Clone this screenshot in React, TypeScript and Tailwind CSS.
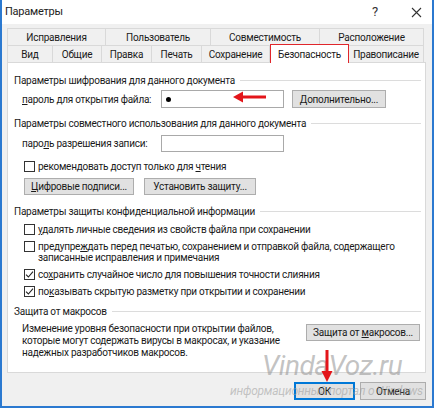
import React from 'react'

const font = { fontFamily: 'Roboto, "Noto Sans", sans-serif' }

function Section({ title, children }: { title: string; children?: React.ReactNode }) {
  return (
    <div>
      <div className="flex items-center gap-[5px] h-[14px]">
        <span className="whitespace-nowrap">{title}</span>
        <div className="flex-1 h-px bg-[#dcdcdc] mr-[4px]" />
      </div>
      {children}
    </div>
  )
}

function Button({ label, className = '' }: { label: React.ReactNode; className?: string }) {
  return (
    <div
      className={`h-[17px] flex items-center justify-center bg-[#e1e1e1] border border-[#adadad] whitespace-nowrap ${className}`}
    >
      {label}
    </div>
  )
}

function Check({ checked, children }: { checked?: boolean; children: React.ReactNode }) {
  return (
    <div className="flex items-start gap-[3px] pl-[16px]">
      <div className="mt-[1px] w-[11px] h-[11px] border border-[#333] bg-white flex items-center justify-center shrink-0">
        {checked && (
          <svg width="9" height="9" viewBox="0 0 9 9">
            <path d="M1 4.6 L3.4 7 L8 1.6" fill="none" stroke="#222" strokeWidth="1.1" />
          </svg>
        )}
      </div>
      <div className="leading-[11px] pt-[1px] whitespace-nowrap">{children}</div>
    </div>
  )
}

const row1 = [
  { t: 'Исправления', w: 99 },
  { t: 'Пользователь', w: 105 },
  { t: 'Совместимость', w: 109 },
  { t: 'Расположение', w: 104 },
]

const row2 = [
  { t: 'Вид', w: 46 },
  { t: 'Общие', w: 49 },
  { t: 'Правка', w: 50 },
  { t: 'Печать', w: 50 },
  { t: 'Сохранение', w: 68 },
  { t: 'Безопасность', w: 79 },
  { t: 'Правописание', w: 75 },
]

export default function App() {
  return (
    <div
      className="relative w-[434px] h-[408px] overflow-hidden bg-[#f0f0f0] border-x-[2px] border-b-[2px] border-[#2b79d0] text-[10px] tracking-[-0.25px] text-[#1a1a1a]"
      style={font}
    >
      {/* title bar */}
      <div className="h-[24px] bg-white flex items-center pl-[3px] pr-[10px]">
        <span className="text-[11px] text-[#222]">Параметры</span>
        <span className="ml-auto text-[13px] text-[#333] mr-[33px]">?</span>
        <svg width="11" height="11" viewBox="0 0 11 11">
          <path d="M1 1 L10 10 M10 1 L1 10" stroke="#333" strokeWidth="1.1" />
        </svg>
      </div>

      {/* tabs */}
      <div className="pt-[4px] pl-[5px] whitespace-nowrap">
        <div className="flex h-[17px]">
          {row1.map((r, i) => (
            <div
              key={r.t}
              style={{ width: r.w }}
              className={`flex items-center justify-center border-t border-r border-[#d9d9d9] ${i === 0 ? 'border-l' : ''}`}
            >
              {r.t}
            </div>
          ))}
        </div>
        <div className="flex h-[17px] items-end">
          {row2.map((r, i) =>
            r.t === 'Безопасность' ? (
              <div
                key={r.t}
                style={{ width: r.w }}
                className="relative z-10 h-[19px] flex items-center justify-center bg-white border-x border-t border-[#e0262b] -mb-px"
              >
                {r.t}
              </div>
            ) : (
              <div
                key={r.t}
                style={{ width: r.w }}
                className={`h-[17px] flex items-center justify-center border-t border-r border-[#d9d9d9] ${i === 0 ? 'border-l' : ''}`}
              >
                {r.t}
              </div>
            ),
          )}
        </div>
      </div>

      {/* panel */}
      <div className="ml-[5px] w-[419px] h-[311px] bg-white border border-[#d9d9d9] pl-[6px] pt-[10px] whitespace-nowrap">
        <Section title="Параметры шифрования для данного документа">
          <div className="flex items-center h-[18px] mt-[3px] pl-[8px]">
            <span className="w-[139px]">
              <u>п</u>ароль для открытия файла:
            </span>
            <div className="relative w-[123px] h-[18px] border border-[#a9a9a9] flex items-center pl-[4px]">
              <span className="w-[5px] h-[5px] rounded-full bg-black" />
            </div>
            <Button label={<span>Дополнительно...</span>} className="ml-[8px] w-[94px] h-[18px]" />
          </div>
        </Section>

        <div className="mt-[8px]">
          <Section title="Параметры совместного использования для данного документа">
            <div className="flex items-center h-[17px] mt-[5px] pl-[8px]">
              <span className="w-[139px]">
                паро<u>л</u>ь разрешения записи:
              </span>
              <div className="w-[123px] h-[17px] border border-[#a9a9a9]" />
            </div>
            <div className="mt-[8px] -ml-[6px]">
              <Check>
                рекомендовать доступ только для <u>ч</u>тения
              </Check>
            </div>
            <div className="flex gap-[10px] mt-[6px] pl-[10px]">
              <Button label={<span><u>Ц</u>ифровые подписи...</span>} className="w-[110px]" />
              <Button label="Установить защиту..." className="w-[112px]" />
            </div>
          </Section>
        </div>

        <div className="mt-[9px]">
          <Section title="Параметры защиты конфиденциальной информации">
            <div className="mt-[5px] -ml-[6px] flex flex-col gap-[5px]">
              <Check>
                <u>у</u>далять личные сведения из свойств файла при сохранении
              </Check>
              <Check>
                предупре<u>ж</u>дать перед печатью, сохранением и отправкой файла, содержащего
                <br />
                записанные исправления и примечания
              </Check>
              <Check checked>
                со<u>х</u>ранить случайное число для повышения точности слияния
              </Check>
              <Check checked>
                по<u>к</u>азывать скрытую разметку при открытии и сохранении
              </Check>
            </div>
          </Section>
        </div>

        <div className="mt-[7px]">
          <Section title="Защита от макросов">
            <div className="flex items-start mt-[5px] pl-[8px]">
              <div className="leading-[12px]">
                Изменение уровня безопасности при открытии файлов,
                <br />
                которые могут содержать вирусы в макросах, и указание
                <br />
                надежных разработчиков макросов.
              </div>
              <Button
                label={<span>Защита от <u>м</u>акросов...</span>}
                className="ml-auto mr-[5px] mt-[1px] w-[114px]"
              />
            </div>
          </Section>
        </div>
      </div>

      {/* dialog buttons */}
      <div className="flex justify-end gap-[5px] pr-[6px] mt-[9px]">
        <div className="w-[61px] h-[18px] flex items-center justify-center bg-[#e1e1e1] border-2 border-[#0078d7]">
          ОК
        </div>
        <Button label="Отмена" className="w-[66px] h-[18px]" />
      </div>

      {/* watermark */}
      <div className="absolute left-[260px] top-[352px] text-[28px] italic text-[#9a9a9a]/60 leading-none tracking-[-0.5px]">
        VindaVoz.ru
      </div>
      <div className="absolute left-[228px] top-[385px] text-[12px] italic text-[#9a9a9a]/55 leading-none whitespace-nowrap">
        информационный портал о Windows
      </div>

      {/* red arrows */}
      <svg className="absolute left-[230px] top-[90px]" width="36" height="14" viewBox="0 0 36 14">
        <path d="M10 7 H34" stroke="#e3151a" strokeWidth="3" />
        <path d="M1 7 L11 1.5 L11 12.5 Z" fill="#e3151a" />
      </svg>
      <svg className="absolute left-[318px] top-[349px]" width="14" height="34" viewBox="0 0 14 34">
        <path d="M7 1 V24" stroke="#e3151a" strokeWidth="3" />
        <path d="M7 33 L1.5 22 L12.5 22 Z" fill="#e3151a" />
      </svg>
    </div>
  )
}
